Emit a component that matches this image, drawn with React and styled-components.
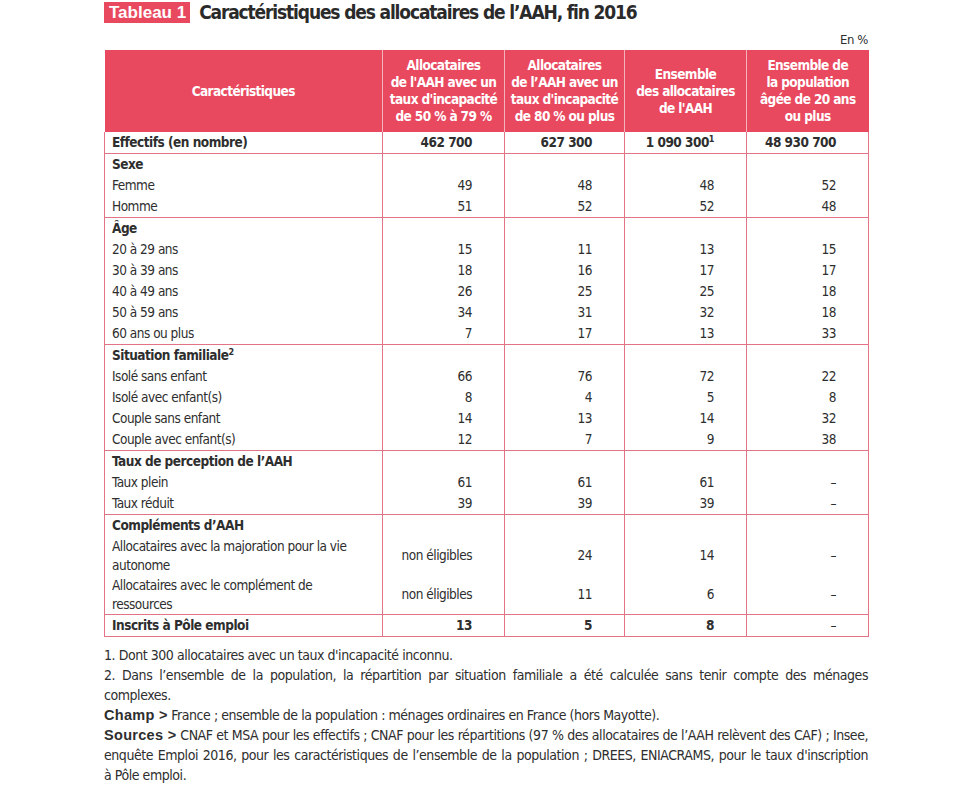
import styled, { createGlobalStyle } from "styled-components";

const RED = "#e9495f";
const LINE = "#e27486";
const INK = "#2e2e2e";
const NARROW = `"Liberation Sans Narrow", "DejaVu Sans Condensed", "Liberation Sans", sans-serif`;

const GlobalStyle = createGlobalStyle`
  body {
    margin: 0;
    background: #fff;
    color: ${INK};
    font-family: ${NARROW};
  }
`;

const groups = [
  {
    title: "Sexe",
    rows: [
      ["Femme", "49", "48", "48", "52"],
      ["Homme", "51", "52", "52", "48"],
    ],
  },
  {
    title: "Âge",
    rows: [
      ["20 à 29 ans", "15", "11", "13", "15"],
      ["30 à 39 ans", "18", "16", "17", "17"],
      ["40 à 49 ans", "26", "25", "25", "18"],
      ["50 à 59 ans", "34", "31", "32", "18"],
      ["60 ans ou plus", "7", "17", "13", "33"],
    ],
  },
  {
    title: "Situation familiale",
    note: "2",
    rows: [
      ["Isolé sans enfant", "66", "76", "72", "22"],
      ["Isolé avec enfant(s)", "8", "4", "5", "8"],
      ["Couple sans enfant", "14", "13", "14", "32"],
      ["Couple avec enfant(s)", "12", "7", "9", "38"],
    ],
  },
  {
    title: "Taux de perception de l’AAH",
    rows: [
      ["Taux plein", "61", "61", "61", "–"],
      ["Taux réduit", "39", "39", "39", "–"],
    ],
  },
  {
    title: "Compléments d’AAH",
    tall: true,
    rows: [
      ["Allocataires avec la majoration pour la vie autonome", "non éligibles", "24", "14", "–"],
      ["Allocataires avec le complément de ressources", "non éligibles", "11", "6", "–"],
    ],
  },
];

const Page = styled.div`
  width: 764px;
  padding: 1px 0 20px 104px;
`;

const TitleBar = styled.h1`
  display: flex;
  align-items: center;
  gap: 9px;
  margin: 0;
  height: 22px;
  font-family: ${NARROW};
  font-size: 19px;
  letter-spacing: -1.15px;
  font-weight: 700;
  color: #2a2a2a;
`;

const Badge = styled.span`
  background: ${RED};
  color: #fff;
  font-family: "Liberation Sans", Arial, sans-serif;
  font-size: 17px;
  letter-spacing: 0;
  font-weight: 700;
  line-height: 21px;
  padding: 0 4px 0 5px;
`;

const Unit = styled.div`
  text-align: right;
  font-size: 13px;
  letter-spacing: -0.4px;
  line-height: 16px;
  margin: 9px 0 2px;
`;

const Table = styled.table`
  width: 764px;
  border-collapse: collapse;
  table-layout: fixed;
  font-size: 13.5px;
  letter-spacing: -0.5px;
  color: ${INK};
`;

const HeadCell = styled.th`
  background: ${RED};
  color: #fff;
  font-weight: 700;
  font-size: 13.5px;
  letter-spacing: -0.6px;
  line-height: 17px;
  text-align: center;
  vertical-align: middle;
  padding: 7px 4px;
  height: 68px;
  border-left: 1px solid #f3b3bd;
  &:first-child {
    border-left: none;
  }
`;

const Group = styled.tbody`
  border-bottom: 1px solid ${LINE};
`;

const Cell = styled.td`
  height: ${(p) => (p.$tall ? "39px" : "21px")};
  line-height: ${(p) => (p.$tall ? "19px" : "21px")};
  padding: ${(p) => (p.$label ? "0 16px 0 7px" : "0 32px 0 4px")};
  text-align: ${(p) => (p.$label ? "left" : "right")};
  font-weight: ${(p) => (p.$bold ? 700 : 400)};
  border-left: 1px solid ${LINE};
  border-right: 1px solid ${LINE};
  vertical-align: middle;
  white-space: ${(p) => (p.$label ? "normal" : "nowrap")};
`;

const Sup = styled.sup`
  font-size: 9px;
  line-height: 0;
  vertical-align: 5px;
`;

const Notes = styled.div`
  margin-top: 8px;
  font-size: 14px;
  letter-spacing: -0.45px;
  line-height: 20px;
  p {
    margin: 0;
    text-align: justify;
  }
`;

const Lead = styled.b`
  font-family: "Liberation Sans", Arial, sans-serif;
  font-size: 14.5px;
  line-height: 1;
  letter-spacing: 0.3px;
  font-weight: 700;
`;

const widths = [278, 122, 120, 122, 122];

export default function App() {
  return (
    <Page>
      <GlobalStyle />
      <TitleBar>
        <Badge>Tableau 1</Badge>
        Caractéristiques des allocataires de l’AAH, fin 2016
      </TitleBar>
      <Unit>En %</Unit>
      <Table>
        <colgroup>
          {widths.map((w, i) => (
            <col key={i} style={{ width: w }} />
          ))}
        </colgroup>
        <thead>
          <tr>
            <HeadCell>Caractéristiques</HeadCell>
            <HeadCell>
              Allocataires
              <br />
              de l'AAH avec un
              <br />
              taux d'incapacité
              <br />
              de 50 % à 79 %
            </HeadCell>
            <HeadCell>
              Allocataires
              <br />
              de l’AAH avec un
              <br />
              taux d'incapacité
              <br />
              de 80 % ou plus
            </HeadCell>
            <HeadCell>
              Ensemble
              <br />
              des allocataires
              <br />
              de l'AAH
            </HeadCell>
            <HeadCell>
              Ensemble de
              <br />
              la population
              <br />
              âgée de 20 ans
              <br />
              ou plus
            </HeadCell>
          </tr>
        </thead>
        <Group>
          <tr>
            <Cell $label $bold>Effectifs (en nombre)</Cell>
            <Cell $bold>462 700</Cell>
            <Cell $bold>627 300</Cell>
            <Cell $bold>
              1 090 300<Sup>1</Sup>
            </Cell>
            <Cell $bold>48 930 700</Cell>
          </tr>
        </Group>
        {groups.map((g) => (
          <Group key={g.title}>
            <tr>
              <Cell $label $bold>
                {g.title}
                {g.note && <Sup>{g.note}</Sup>}
              </Cell>
              <Cell />
              <Cell />
              <Cell />
              <Cell />
            </tr>
            {g.rows.map((r) => (
              <tr key={r[0]}>
                {r.map((v, i) => (
                  <Cell key={i} $label={i === 0} $tall={g.tall}>
                    {v}
                  </Cell>
                ))}
              </tr>
            ))}
          </Group>
        ))}
        <Group>
          <tr>
            <Cell $label $bold>Inscrits à Pôle emploi</Cell>
            <Cell $bold>13</Cell>
            <Cell $bold>5</Cell>
            <Cell $bold>8</Cell>
            <Cell>–</Cell>
          </tr>
        </Group>
      </Table>
      <Notes>
        <p>1. Dont 300 allocataires avec un taux d'incapacité inconnu.</p>
        <p>
          2. Dans l’ensemble de la population, la répartition par situation familiale a été
          calculée sans tenir compte des ménages complexes.
        </p>
        <p>
          <Lead>Champ &gt;</Lead> France ; ensemble de la population : ménages ordinaires en
          France (hors Mayotte).
        </p>
        <p>
          <Lead>Sources &gt;</Lead> CNAF et MSA pour les effectifs ; CNAF pour les répartitions
          (97 % des allocataires de l’AAH relèvent des CAF) ; Insee, enquête Emploi 2016, pour les
          caractéristiques de l’ensemble de la population ; DREES, ENIACRAMS, pour le taux
          d'inscription {"à\u00a0Pôle\u00a0emploi."}
        </p>
      </Notes>
    </Page>
  );
}
